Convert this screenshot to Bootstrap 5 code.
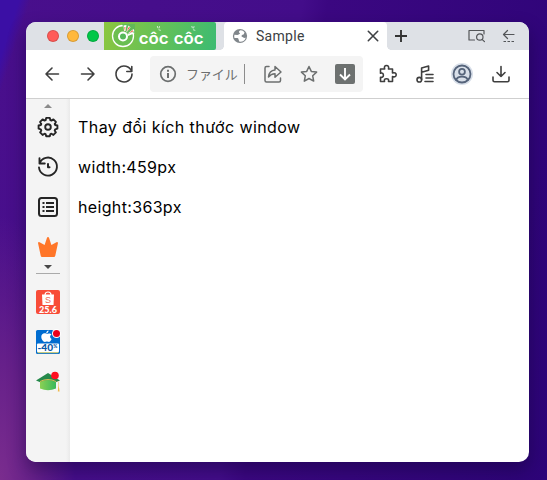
<!DOCTYPE html>
<html lang="vi">
<head>
<meta charset="utf-8">
<meta name="viewport" content="width=device-width, initial-scale=1">
<title>Sample</title>
<link href="https://cdn.jsdelivr.net/npm/bootstrap@5.3.0/dist/css/bootstrap.min.css" rel="stylesheet">
<style>
body{width:547px;height:480px;overflow:hidden;padding:22px 18px 18px 26px;font-family:"Noto Sans CJK JP",sans-serif;
 background:radial-gradient(ellipse 75px 270px at 0 485px,#7b2d8e 0,#66208a 45%,rgba(90,24,138,0) 100%),linear-gradient(108deg,#3b0fa5 0 18px,rgba(60,15,165,0) 29px),linear-gradient(100deg,#490f8c 0,#430d8a 48%,#3b0781 52%,#2d0478 100%)}
svg{display:block;flex:none;overflow:visible}
.ln{fill:none;stroke:currentColor;stroke-width:1.6;stroke-linecap:round;stroke-linejoin:round}
.win{border-radius:10px;box-shadow:0 8px 18px rgba(15,0,45,.42)}
.strip{height:28px;background:#dee1e6;padding-left:21px}
.dot{width:12px;height:12px;border:.5px solid rgba(0,0,0,.15)}
.dot-close{background:#ff5b58}.dot-min{background:#ffb83d}.dot-max{background:#00c748}
.brand{width:112px;height:28px;margin-left:5px;background:linear-gradient(105deg,#8cc63f,#3cbb72);border-radius:0 2px 2px 0}
.tab{width:163px;margin-left:8px;padding:0 7px 0 8px;border-radius:4px 4px 0 0;position:relative}
.tab:before,.tab:after{content:"";position:absolute;bottom:0;width:4px;height:4px}
.tab:before{left:-4px;background:radial-gradient(circle at 0 0,transparent 3.6px,#fff 4px)}
.tab:after{right:-4px;background:radial-gradient(circle at 100% 0,transparent 3.6px,#fff 4px)}
.tabname{font:14px/20px Roboto,sans-serif;letter-spacing:.3px;color:#3c4043;margin-left:8px}
.newtab{margin-left:7px}
.stripend{gap:16px;margin-right:12px;color:#535558}
.tools{height:49px;border-bottom:1px solid #cfcfcf;padding-left:14px;gap:12px;color:#3f3f3f}
.addr{width:213px;height:36px;background:#f4f4f4;border-radius:4px;margin-left:2px;padding:0 6px;color:#6c6f6f}
.addrtext{font-size:13px;line-height:20px;width:58px;margin-left:6px;letter-spacing:-.1px}
.bar{width:1px;height:20px;background:#8c8c8c;margin-right:16px}
.actions{gap:12px}
.nudge{margin-left:1px}.nudge-lg{margin-left:3px}
.side{width:44px;background:linear-gradient(90deg,#f4f4f4 0 40px,#eaeaea);color:#252525;padding-top:5px}
.side svg+svg{margin-top:16px}
.side svg.first{margin-top:7px}
.side svg.down{margin-top:6px}
.rule{width:24px;height:1px;background:#aaa;margin:4px 0 16px}
.doc{padding:16px 8px 0;color:#000}
.doc p{font:16px/24px Inter,sans-serif;margin:0 0 16px;letter-spacing:.34px}
.doc p:first-child{letter-spacing:.43px}
</style>
<script src="https://cdn.jsdelivr.net/npm/bootstrap@5.3.0/dist/js/bootstrap.bundle.min.js"></script>
</head>
<body>
<main class="win d-flex flex-column h-100 overflow-hidden bg-white">
 <header class="strip d-flex align-items-center flex-shrink-0">
  <div class="d-flex gap-2"><span class="dot dot-close rounded-circle"></span><span class="dot dot-min rounded-circle"></span><span class="dot dot-max rounded-circle"></span></div>
  <div class="brand flex-shrink-0">
   <svg width="112" height="28" viewBox="0 0 112 28">
    <circle cx="19" cy="14" r="10.500" fill="#55b85a" fill-opacity=".45" stroke="#fff" stroke-width="1.300"/>
    <path d="M18 2h13v9h-9z" fill="#62b958"/>
    <path d="M19.500 3.500 22.500 3 21.500 9 20 9zM28 10 31 11 24 14 23.500 12.500z" fill="#fff"/>
    <path d="M24.500 3.500 26.500 5.500 22 11zM29.500 7 30.500 9.200 23 12z" fill="#fff"/>
    <path d="M20.300 5.200 21.400 5 21 9.500zM25 4.800 25.900 5.700 22.700 9.500zM28.800 8.200 29.400 9.200 25 11z" fill="#f44a2d"/>
    <circle cx="19" cy="14.500" r="4" fill="#56b95c" stroke="#fff" stroke-width="2"/>
    <text y="21.500" fill="#fff" font-family="Inter,sans-serif" font-size="16.500" font-weight="600"><tspan x="34.700" textLength="30" lengthAdjust="spacingAndGlyphs">côc</tspan><tspan x="69.700" textLength="30" lengthAdjust="spacingAndGlyphs">côc</tspan></text>
    <path d="m53.300 4 .6 2.200M55.600 4.200l-.6 2.200M54.500 7.700l2.300.7M87.800 4l.6 2.200M90.100 4.200l-.6 2.200M89 7.700l2.300.7" fill="none" stroke="#fff" stroke-width=".7"/>
   </svg>
  </div>
  <div class="tab bg-white h-100 d-flex align-items-center">
   <svg width="16" height="16" viewBox="0 0 16 16"><circle cx="8" cy="8" r="7.100" fill="#80868b"/><path d="M8.800 2.200c-2.500.9-2.300 2.400-.6 2.900-.4 1.400-1.700 1.600-2.900 1.800L2.500 6.800C2.100 8 2.200 9 2.500 10l2.700.1c1.800.1 1 1.700 2.300 3.700 3.200.3 5.500-1.400 6.200-4-2.200.6-2.300-.8-4-1-.5-1.400.4-2 1.700-2.200.8-.3.600-1.400 1.100-2.400C11.500 3 10.300 2.300 8.800 2.200z" fill="#fff"/></svg>
   <span class="tabname">Sample</span>
   <svg class="ms-auto ln" width="14" height="14" viewBox="0 0 14 14" color="#3f4144"><path d="m2.300 2.300 9.400 9.400m0-9.400-9.400 9.400"/></svg>
  </div>
  <svg class="ln newtab" width="14" height="14" viewBox="0 0 14 14" color="#333"><path stroke-width="1.900" stroke-linecap="butt" d="M7 1v12M1 7h12"/></svg>
  <div class="stripend d-flex ms-auto align-items-center">
   <svg class="ln" width="18" height="14" viewBox="0 0 18 14"><path stroke-width="1.200" d="M6.500 11H1V1.500h15V5"/><circle cx="11.800" cy="8" r="3.200" stroke-width="1.200"/><path stroke-width="1.200" d="m14.100 10.300 2.400 2.400"/></svg>
   <svg class="ln" width="15" height="14" viewBox="0 0 15 14"><path stroke-width="1.200" d="M12 5.500H1.500m4-4-4 4 4 4"/><path stroke-width="1.200" stroke-linecap="butt" stroke-dasharray="2.500 1.500" d="M1.500 12.500h11.500"/></svg>
  </div>
 </header>
 <nav class="tools d-flex align-items-center flex-shrink-0">
  <svg class="ln" width="24" height="24" viewBox="0 0 24 24"><path d="M18.500 12H6m6-6-6 6 6 6"/></svg>
  <svg class="ln" width="24" height="24" viewBox="0 0 24 24"><path d="M5.500 12H18m-6-6 6 6-6 6"/></svg>
  <svg class="ln" width="24" height="24" viewBox="0 0 24 24"><path d="M19.600 9.500A8 8 0 1 0 20 12M19.800 4.500v5h-5"/></svg>
  <div class="addr d-flex align-items-center flex-shrink-0">
   <svg class="ln" width="24" height="24" viewBox="0 0 24 24"><circle cx="12" cy="12" r="7.300" stroke-width="1.700"/><path stroke-linecap="butt" stroke-width="2" d="M12 11v5M12 7.700v2"/></svg>
   <span class="addrtext flex-shrink-0 text-nowrap">ファイル</span><span class="bar"></span>
   <div class="actions d-flex">
    <svg class="ln" width="24" height="24" viewBox="0 0 24 24"><path stroke-width="1.500" d="M8 4.500H5.500a1.500 1.500 0 0 0-1.500 1.500v12.500A1.500 1.500 0 0 0 5.500 20h12.500a1.500 1.500 0 0 0 1.500-1.500V16M7.500 15c.4-4.200 2.500-6.700 6.500-7V4.500l6 5.500-6 5.300v-3.500c-2.700.1-4.800 1-6.500 3.200z"/></svg>
    <svg class="ln" width="24" height="24" viewBox="0 0 24 24"><path stroke-width="1.500" d="m12 4.500 2.300 4.900 5.300.7-3.900 3.700 1 5.300-4.700-2.600-4.700 2.600 1-5.300-3.900-3.700 5.300-.7z"/></svg>
    <svg width="24" height="24" viewBox="0 0 24 24"><rect x="2" y="2" width="20" height="20" rx="2" fill="#6d7170"/><path d="M12 6v11.500m-5-5 5 5 5-5" fill="none" stroke="#fff" stroke-width="1.900"/></svg>
   </div>
  </div>
  <svg class="ln nudge" width="24" height="24" viewBox="0 0 24 24"><path d="M4.500 7h4.200c-.8-2.200.1-3.500 1.800-3.500S13.100 4.800 12.500 7h4v4c2.300-.7 3.700.1 3.700 1.800s-1.400 2.500-3.700 1.800V19.500h-4c.5-2-.4-2.800-2-2.800s-2.500.8-2 2.800h-4v-4.300c2 .5 2.900-.4 2.900-2s-.9-2.500-2.900-2z"/></svg>
  <svg class="ln nudge" width="24" height="24" viewBox="0 0 24 24"><circle cx="6.300" cy="17.700" r="2.300"/><path d="M8.600 17.700V6l7-2v4.300l-7 2M13 12.500h7M13 16h7M12 19.500h8"/></svg>
  <svg class="ln nudge" width="24" height="24" viewBox="0 0 24 24" color="#56647b"><circle cx="12" cy="12" r="11" fill="#d8dfe9" stroke="none"/><circle cx="12" cy="12" r="8.500" stroke-width="1.800"/><circle cx="12" cy="9.800" r="2.900" stroke-width="1.800"/><path stroke-width="1.800" d="M6.300 18c1-4.500 10.400-4.500 11.400 0"/></svg>
  <svg class="ln nudge-lg" width="24" height="24" viewBox="0 0 24 24"><path d="M12 4.500v10m-4-4 4 4 4-4M4 15v3.300A1.500 1.500 0 0 0 5.500 19.800h13a1.500 1.500 0 0 0 1.500-1.500V15"/></svg>
 </nav>
 <section class="d-flex flex-grow-1">
  <aside class="side d-flex flex-column align-items-center flex-shrink-0">
   <svg width="8" height="4" viewBox="0 0 8 4"><path d="M0 4 4 0l4 4z" fill="#8b8b8b"/></svg>
   <svg class="ln first" width="24" height="24" viewBox="0 0 24 24"><path stroke-width="1.900" d="M10.200 2.900h3.600l.6 2.300 1 .4 2-1.200 2.500 2.500-1.200 2 .5 1.100 2.200.5v3.200l-2.200.6-.5 1.100 1.200 2-2.500 2.500-2-1.200-1 .4-.6 2.200h-3.600l-.6-2.200-1-.4-2 1.200-2.500-2.500 1.200-2-.5-1.100-2.200-.6v-3.200l2.200-.5.500-1.100-1.200-2 2.500-2.500 2 1.200 1-.4z"/><circle cx="12" cy="12" r="2.800" stroke-width="1.900"/></svg>
   <svg class="ln" width="24" height="24" viewBox="0 0 24 24"><path stroke-width="1.900" d="M3.500 8.500A9 9 0 1 1 3 12.500M3.500 3.200v5.300h5.300"/><path stroke-width="2" d="M12 9v3.300h1.500"/></svg>
   <svg class="ln" width="24" height="24" viewBox="0 0 24 24"><rect x="3" y="3" width="18" height="18" rx="2.500" stroke-width="2"/><path stroke-linecap="butt" stroke-width="1.900" d="M6.500 8h2m1.500 0h8M6.500 12h2m1.500 0h8M6.500 16h2m1.500 0h8"/></svg>
   <svg width="24" height="24" viewBox="0 0 24 24"><path d="M12 2q.8 0 1 .8l2.400 7.200 5-2.800q1.700-.6 1.500 1.200l-2.700 12.700q-.3.900-1.200.9H6q-.9 0-1.200-.9L2.100 8.400Q1.900 6.600 3.600 7.200l5 2.800L11 2.800Q11.200 2 12 2z" fill="#ff7629"/></svg>
   <svg class="down" width="8" height="4" viewBox="0 0 8 4"><path d="M0 0 4 4l4-4z" fill="#484848"/></svg>
   <span class="rule"></span>
   <svg width="24" height="24" viewBox="0 0 24 24"><rect width="24" height="24" rx="2" fill="#f84c38"/><path d="M6 4.500h12L17.500 15h-11z" fill="#fff"/><path d="M9 5c0-4 6-4 6 0" fill="none" stroke="#fff" stroke-width="1.200"/><text x="12" y="13" text-anchor="middle" font-family="Liberation Sans,sans-serif" font-size="9" fill="#ee6957">S</text><text x="3" y="22.800" textLength="18" lengthAdjust="spacingAndGlyphs" font-family="Lato,sans-serif" font-size="9.500" font-weight="900" fill="#fff">25.6</text></svg>
   <svg width="24" height="24" viewBox="0 0 24 24"><rect width="24" height="24" rx="1.500" fill="#006cd0"/><path d="M10.500 3.800c-2.500-1.200-5.200 0-5.200 3 0 2.600 2 5.200 3.500 5.200.8 0 1.200-.4 2-.4s1.100.4 2 .4c1.200 0 2.300-1.500 2.800-3-2-.8-2-3.500-.1-4.500-1.500-1.700-3.200-1-5-.7zM10.200 3.300c0-1.500 1-2.600 2.400-2.800 0 1.600-1 2.700-2.400 2.800z" fill="#fff"/><rect x="1" y="13.500" width="22" height="8.700" rx="1" fill="#fff"/><path d="M1.500 22.700h21" stroke="#e6d96b"/><text x="1.500" y="21.400" textLength="15.500" lengthAdjust="spacingAndGlyphs" font-family="Lato,sans-serif" font-size="10" font-weight="900" fill="#0759a8">-40</text><text x="17.300" y="18" font-family="Lato,sans-serif" font-size="5" font-weight="900" fill="#0759a8">%</text><circle cx="20.500" cy="3.500" r="4.500" fill="#fff"/><circle cx="20.500" cy="3.500" r="3.500" fill="#e8001c"/></svg>
   <svg width="24" height="24" viewBox="0 0 24 24"><defs><linearGradient id="cap"><stop stop-color="#8bd054"/><stop offset="1" stop-color="#39b95c"/></linearGradient></defs><path d="m0 10.500 12-7.500 12 7.500-12 5z" fill="#25894b"/><path d="M4 12q8-4 16 0V18.500q-8 3.500-16 0z" fill="url(#cap)"/><path d="M4 11.500q8-4 16 0" fill="none" stroke="#d9be55" stroke-width="1"/><path d="m20 11 2.800 1v4l.8 5.500h-1.800l.5-5.500v-3.700z" fill="#efb94c"/><circle cx="19" cy="5.500" r="3.800" fill="#ff0e20"/></svg>
  </aside>
  <article class="doc flex-grow-1"><p>Thay đổi kích thước window</p><p>width:459px</p><p>height:363px</p></article>
 </section>
</main>
</body>
</html>
